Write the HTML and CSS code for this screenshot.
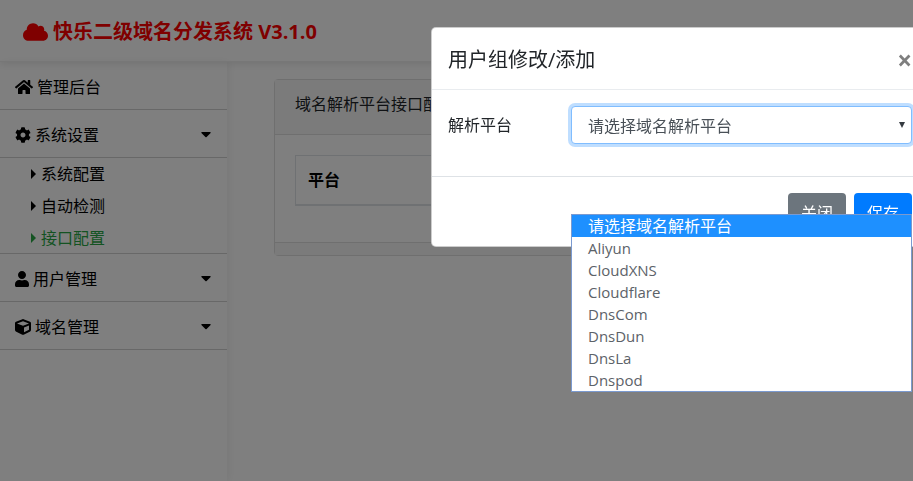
FILE: index.html
```
<!DOCTYPE html>
<html lang="zh-CN">

<head>
    <meta charset="UTF-8">
    <meta name="viewport" content="width=device-width, initial-scale=1.0">
    <title>快乐二级域名分发系统 V3.1.0</title>
    <link rel="stylesheet" href="styles.css">
</head>

<body>
    <header class="navbar">
        <a class="brand" href="#">
            <svg class="brand-icon" viewBox="0 0 640 512"><path d="M537.6 226.600c4.100-10.700 6.400-22.400 6.400-34.600 0-53-43-96-96-96-19.700 0-38.100 6-53.300 16.200C367 64.200 315.300 32 256 32c-88.400 0-160 71.600-160 160 0 2.700.1 5.400.2 8.100C40.200 219.800 0 273.200 0 336c0 79.500 64.500 144 144 144h368c70.700 0 128-57.300 128-128 0-61.900-44-113.600-102.400-125.400z"/></svg>
            快乐二级域名分发系统 V3.1.0
        </a>
    </header>

    <div class="layout">
        <!-- Sidebar -->
        <nav class="sidebar">
            <ul class="menu">
                <li>
                    <a class="menu-link" href="#">
                        <svg class="icon icon-wide" viewBox="0 0 576 512"><path d="M280.400 148.300L96 300.100V464a16 16 0 0 0 16 16l112.100-.3a16 16 0 0 0 15.900-16V368a16 16 0 0 1 16-16h64a16 16 0 0 1 16 16v95.600a16 16 0 0 0 16 16.100L464 480a16 16 0 0 0 16-16V300L295.700 148.300a12.200 12.200 0 0 0-15.300 0zM571.600 251.500L488 182.600V44a12 12 0 0 0-12-12h-56a12 12 0 0 0-12 12v72.600L318.500 43a48 48 0 0 0-61 0L4.300 251.500a12 12 0 0 0-1.600 16.900l25.500 31a12 12 0 0 0 16.900 1.600l235.300-193.700a12.200 12.200 0 0 1 15.300 0L530.900 301a12 12 0 0 0 16.900-1.600l25.500-31a12 12 0 0 0-1.700-16.900z"/></svg>
                        管理后台
                    </a>
                </li>
                <li>
                    <a class="menu-link" href="#">
                        <svg class="icon" viewBox="0 0 512 512"><path d="M487.400 315.700l-42.600-24.600c4.300-23.200 4.300-47 0-70.200l42.600-24.600c4.900-2.800 7.100-8.600 5.500-14-11.100-35.600-30-67.800-54.700-94.600-3.800-4.100-10-5.100-14.800-2.300L380.800 110c-17.900-15.400-38.500-27.300-60.800-35.100V25.800c0-5.600-3.900-10.500-9.400-11.700-36.700-8.200-74.300-7.800-109.200 0-5.500 1.200-9.400 6.100-9.400 11.700V75c-22.200 7.900-42.800 19.800-60.800 35.100L88.700 85.500c-4.900-2.800-11-1.900-14.800 2.300-24.700 26.700-43.600 58.900-54.700 94.600-1.700 5.400.6 11.200 5.500 14L67.300 221c-4.300 23.200-4.300 47 0 70.200l-42.600 24.600c-4.900 2.800-7.100 8.600-5.500 14 11.100 35.600 30 67.800 54.700 94.600 3.800 4.100 10 5.100 14.800 2.300l42.600-24.600c17.900 15.400 38.500 27.300 60.800 35.100v49.200c0 5.600 3.900 10.500 9.400 11.700 36.700 8.200 74.300 7.800 109.200 0 5.500-1.200 9.400-6.100 9.400-11.700v-49.200c22.200-7.900 42.800-19.800 60.800-35.100l42.600 24.600c4.900 2.800 11 1.900 14.800-2.300 24.700-26.700 43.600-58.900 54.700-94.600 1.500-5.500-.7-11.300-5.600-14.100zM256 336c-44.100 0-80-35.900-80-80s35.900-80 80-80 80 35.900 80 80-35.900 80-80 80z"/></svg>
                        系统设置
                        <svg class="caret" viewBox="0 0 10 6"><path d="M1 0h8q1 0 .6 1L5.600 5q-.6.600-1.200 0L.4 1Q0 0 1 0z"/></svg>
                    </a>
                    <ul class="submenu">
                        <li><a class="submenu-link" href="#">系统配置</a></li>
                        <li><a class="submenu-link" href="#">自动检测</a></li>
                        <li><a class="submenu-link active" href="#">接口配置</a></li>
                    </ul>
                </li>
                <li>
                    <a class="menu-link" href="#">
                        <svg class="icon icon-narrow" viewBox="0 0 448 512"><path d="M224 256c70.700 0 128-57.300 128-128S294.700 0 224 0 96 57.300 96 128s57.300 128 128 128zm89.600 32h-16.700c-22.200 10.200-46.900 16-72.900 16s-50.600-5.800-72.900-16h-16.700C60.200 288 0 348.200 0 422.400V464c0 26.500 21.500 48 48 48h352c26.500 0 48-21.500 48-48v-41.600c0-74.200-60.200-134.400-134.400-134.400z"/></svg>
                        用户管理
                        <svg class="caret" viewBox="0 0 10 6"><path d="M1 0h8q1 0 .6 1L5.600 5q-.6.600-1.200 0L.4 1Q0 0 1 0z"/></svg>
                    </a>
                </li>
                <li>
                    <a class="menu-link" href="#">
                        <svg class="icon" viewBox="0 0 512 512"><path d="M239.100 6.300l-208 78c-18.700 7-31.100 25-31.100 45v225.100c0 18.200 10.300 34.800 26.500 42.900l208 104c13.500 6.800 29.400 6.800 42.900 0l208-104c16.300-8.100 26.500-24.800 26.500-42.900V129.300c0-20-12.400-37.900-31.100-44.900l-208-78C262 2.200 250 2.200 239.100 6.300zM256 68.400l192 72v1.100l-192 78-192-78v-1.100l192-72zm32 356V275.500l160-65v133.900l-160 80z"/></svg>
                        域名管理
                        <svg class="caret" viewBox="0 0 10 6"><path d="M1 0h8q1 0 .6 1L5.600 5q-.6.600-1.200 0L.4 1Q0 0 1 0z"/></svg>
                    </a>
                </li>
            </ul>
        </nav>

        <!-- Content -->
        <main class="content">
            <section class="card">
                <div class="card-header">域名解析平台接口配置</div>
                <div class="card-body">
                    <table class="table">
                        <thead>
                            <tr>
                                <th>平台</th>
                            </tr>
                        </thead>
                    </table>
                </div>
                <div class="card-footer"></div>
            </section>
        </main>
    </div>

    <!-- Modal -->
    <div class="modal">
        <form class="modal-content" role="dialog" aria-labelledby="modalTitle">
            <div class="modal-header">
                <h5 class="modal-title" id="modalTitle">用户组修改/添加</h5>
                <button type="button" class="close" aria-label="关闭">×</button>
            </div>
            <div class="modal-body">
                <label for="platform">解析平台</label>
                <div class="select-wrap">
                    <select id="platform" name="platform">
                        <option>请选择域名解析平台</option>
                        <option>Aliyun</option>
                        <option>CloudXNS</option>
                        <option>Cloudflare</option>
                        <option>DnsCom</option>
                        <option>DnsDun</option>
                        <option>DnsLa</option>
                        <option>Dnspod</option>
                    </select>
                    <ul class="options" role="listbox">
                        <li class="selected" role="option" aria-selected="true">请选择域名解析平台</li>
                        <li role="option">Aliyun</li>
                        <li role="option">CloudXNS</li>
                        <li role="option">Cloudflare</li>
                        <li role="option">DnsCom</li>
                        <li role="option">DnsDun</li>
                        <li role="option">DnsLa</li>
                        <li role="option">Dnspod</li>
                    </ul>
                </div>
            </div>
            <div class="modal-footer">
                <button type="button" class="btn btn-secondary">关闭</button>
                <button type="button" class="btn btn-primary">保存</button>
            </div>
        </form>
    </div>
</body>

</html>
```

FILE: styles.css
```
* {
    box-sizing: border-box;
}

body {
    margin: 0;
    font-family: "Open Sans", "Noto Sans CJK SC", sans-serif;
    font-size: 16px;
    line-height: 24px;
    color: #212529;
    background: #fff;
    overflow: hidden;
}

ul {
    margin: 0;
    padding: 0;
    list-style: none;
}

a {
    color: #000;
    text-decoration: none;
}

/* Header */
.navbar {
    position: relative;
    display: flex;
    align-items: center;
    height: 62px;
    padding: 2px 23px 0;
    border-bottom: 1px solid #eee;
    box-shadow: 0 2px 8px rgba(0, 0, 0, 0.1);
}

.brand {
    display: flex;
    align-items: center;
    gap: 5px;
    font-size: 20px;
    font-weight: 700;
    color: #f00;
}

.brand-icon {
    width: 25px;
    height: 20px;
    fill: currentColor;
}

/* Sidebar */
.layout {
    display: flex;
    min-height: calc(100vh - 62px);
}

.sidebar {
    flex: 0 0 227px;
    box-shadow: 2px 0 8px rgba(0, 0, 0, 0.06);
}

.menu-link {
    display: flex;
    align-items: center;
    gap: 4px;
    height: 48px;
    padding: 2px 16px 0 15px;
    border-bottom: 1px solid #d0d0d0;
}

.icon {
    width: 16px;
    height: 16px;
}

.icon-wide {
    width: 18px;
}

.icon-narrow {
    width: 14px;
}

.caret {
    width: 10px;
    height: 6px;
    margin-left: auto;
}

.submenu {
    box-shadow: inset 0 -1px 0 #d0d0d0;
}

.submenu-link {
    display: flex;
    align-items: center;
    gap: 5px;
    height: 32px;
    padding-left: 31px;
}

.submenu-link::before {
    content: "";
    border: 5px solid transparent;
    border-left-color: currentColor;
    border-right-width: 0;
}

.submenu-link.active {
    color: #28a745;
}

/* Card */
.content {
    flex: 1;
    padding: 17px 16px 0 47px;
}

.card {
    border: 1px solid #dfdfdf;
    border-radius: 4px;
}

.card-header {
    padding: 12px 20px 18px;
    background: #f7f7f7;
    border-bottom: 1px solid #dfdfdf;
}

.card-body {
    padding: 20px 20px 36px;
}

.table {
    width: 100%;
    border-collapse: collapse;
}

.table th {
    height: 48px;
    padding: 12px;
    text-align: left;
    color: #000;
    border: 1px solid #dee2e6;
    border-bottom-width: 2px;
}

.card-footer {
    height: 13px;
    background: #f7f7f7;
    border-top: 1px solid #dfdfdf;
}

/* Modal */
.modal {
    position: fixed;
    inset: 0;
    overflow: hidden;
    background: rgba(0, 0, 0, 0.5);
}

.modal-content {
    margin: 27px -16px 0 431px;
    background: #fff;
    border: 1px solid rgba(0, 0, 0, 0.2);
    border-radius: 5px;
}

.modal-header {
    display: flex;
    align-items: center;
    justify-content: space-between;
    height: 62px;
    padding: 2px 16px 0;
    border-bottom: 1px solid #e9ecef;
}

.modal-title {
    margin: 0;
    font-size: 20px;
    font-weight: 400;
}

.close {
    padding: 0;
    border: 0;
    background: none;
    font-family: inherit;
    font-size: 26px;
    font-weight: 700;
    line-height: 24px;
    color: #7f7f7f;
}

.modal-body {
    display: grid;
    grid-template-columns: 123px 1fr;
    align-items: start;
    padding: 16px 16px 32px;
}

.modal-body label {
    padding-top: 7px;
}

.select-wrap {
    position: relative;
}

.select-wrap::after {
    content: "";
    position: absolute;
    top: 16px;
    right: 7px;
    border: 3px solid transparent;
    border-top: 6px solid #343a40;
    border-bottom-width: 0;
}

select {
    appearance: none;
    width: 100%;
    height: 38px;
    padding: 2px 16px 0;
    font-family: inherit;
    font-size: 16px;
    color: #495057;
    background: #fff;
    border: 1px solid #80bdff;
    border-radius: 4px;
    box-shadow: 0 0 0 3px rgba(0, 123, 255, 0.25);
}

.options {
    position: absolute;
    top: 108px;
    left: 0;
    right: 0;
    background: #fff;
    border: 1px solid #7b9ad0;
    color: #5c6268;
}

.options li {
    height: 22px;
    padding-left: 16px;
    font-size: 15px;
    line-height: 22px;
}

.options .selected {
    font-size: 16px;
    color: #fff;
    background: #1e90ff;
}

.modal-footer {
    display: flex;
    justify-content: flex-end;
    gap: 8px;
    padding: 16px 16px 15px;
    border-top: 1px solid #dee2e6;
}

.btn {
    height: 38px;
    padding: 0 13px;
    border: 0;
    border-radius: 4px;
    font-family: inherit;
    font-size: 16px;
    color: #fff;
}

.btn-secondary {
    background: #6c757d;
}

.btn-primary {
    background: #007bff;
}
```
